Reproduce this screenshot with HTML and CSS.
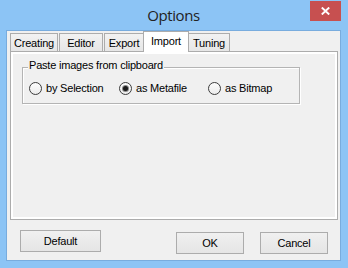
FILE: index.html
```html
<!DOCTYPE html>
<html>
<head>
<meta charset="utf-8">
<title>Options</title>
<link rel="stylesheet" href="styles.css">
</head>
<body>
<div class="window">
  <div class="titlebar">
    <span></span>
    <span class="title">Options</span>
    <div class="close-wrap">
      <div class="close">
        <svg width="9" height="8" viewBox="0 0 9 8"><path d="M0.8 0.5 L8.2 7.5 M8.2 0.5 L0.8 7.5" stroke="#fff" stroke-width="1.9" fill="none"/></svg>
      </div>
    </div>
  </div>
  <div class="client">
    <div class="tabctl">
      <div class="tabrow">
        <div class="tab t-creating">Creating</div>
        <div class="tab t-editor">Editor</div>
        <div class="tab t-export">Export</div>
        <div class="tab t-import selected">Import</div>
        <div class="tab t-tuning">Tuning</div>
      </div>
      <div class="panel">
        <div class="panel-inner">
          <div class="group">
            <div class="legend">Paste images from clipboard</div>
            <div class="radios">
              <div class="radio"><span class="circle"></span><span>by Selection</span></div>
              <div class="radio"><span class="circle checked"></span><span>as Metafile</span></div>
              <div class="radio"><span class="circle"></span><span>as Bitmap</span></div>
            </div>
          </div>
        </div>
      </div>
    </div>
    <div class="buttons">
      <div class="btn btn-default">Default</div>
      <div class="btn btn-ok">OK</div>
      <div class="btn btn-cancel">Cancel</div>
    </div>
  </div>
</div>
</body>
</html>
```
FILE: styles.css
```css
html, body {
  margin: 0;
  padding: 0;
}
body {
  width: 348px;
  height: 268px;
  overflow: hidden;
  background: #8cc4f5;
  font-family: "Liberation Sans", Arial, sans-serif;
  font-size: 11px;
  letter-spacing: -0.2px;
  color: #000;
}
.window {
  box-sizing: border-box;
  width: 348px;
  height: 268px;
  padding: 0 7px 7px 6px;
  display: flex;
  flex-direction: column;
  background: #8cc4f5;
}
.titlebar {
  height: 30px;
  flex: none;
  display: grid;
  grid-template-columns: 1fr auto 1fr;
}
.title {
  font-family: "Open Sans", "DejaVu Sans", sans-serif;
  font-size: 15px;
  line-height: 30px;
  letter-spacing: -0.4px;
  color: #222;
}
.close-wrap {
  display: flex;
  justify-content: flex-end;
  align-items: flex-start;
}
.close {
  width: 31px;
  height: 20px;
  margin-top: 1px;
  background: #c75050;
  display: flex;
  align-items: center;
  justify-content: center;
}
.client {
  flex: 1;
  border: 1px solid #78acde;
  background: #f0f0f0;
  display: flex;
  flex-direction: column;
}
.tabctl {
  margin: 0 2px 0 3px;
}
.tabrow {
  display: flex;
  align-items: flex-end;
  height: 20px;
}
.tab {
  box-sizing: border-box;
  height: 18px;
  border: 1px solid #acacac;
  border-bottom: none;
  background: linear-gradient(#f2f2f2, #e6e6e6);
  text-align: center;
  line-height: 16px;
  padding-top: 1px;
  white-space: nowrap;
}
.t-creating { width: 48px; margin-right: 1px; }
.t-editor { width: 44px; margin-right: 1px; }
.t-export { width: 40px; }
.t-import { width: 46px; margin-left: -1px; }
.t-tuning { width: 42px; margin-left: -1px; }
.tab.selected {
  position: relative;
  z-index: 1;
  height: 21px;
  margin-bottom: -1px;
  background: #fff;
  line-height: 18px;
  padding-top: 0;
  padding-bottom: 2px;
}
.panel {
  box-sizing: border-box;
  height: 169px;
  border: 1px solid #acacac;
  background: #fff;
  padding: 2px;
}
.panel-inner {
  display: flow-root;
  height: 100%;
  background: #f0f0f0;
}
.group {
  box-sizing: border-box;
  width: 278px;
  height: 37px;
  margin: 13px 0 0 9px;
  border: 1px solid #b4b4b4;
  box-shadow: 1px 1px 0 #fff, inset 1px 1px 0 #fff;
}
.legend {
  width: fit-content;
  margin: -9px 0 0 5px;
  padding: 0 1px;
  background: #f0f0f0;
  line-height: 13px;
  white-space: nowrap;
}
.radios {
  display: grid;
  grid-template-columns: 90px 89px auto;
  margin: 10px 0 0 6px;
}
.radio {
  display: flex;
  align-items: center;
  gap: 4px;
  height: 13px;
  line-height: 13px;
  white-space: nowrap;
}
.circle {
  box-sizing: border-box;
  flex: none;
  width: 13px;
  height: 13px;
  border-radius: 50%;
  border: 1px solid #3c3c3c;
  background: linear-gradient(#fdfdfd, #ececec);
  display: flex;
  align-items: center;
  justify-content: center;
}
.circle.checked::after {
  content: "";
  width: 5px;
  height: 5px;
  border-radius: 50%;
  background: #1a1a1a;
  box-shadow: 0 0 0 1px #8a8a8a;
}
.buttons {
  display: flex;
  align-items: flex-start;
  padding: 0 12px 0 13px;
}
.btn {
  box-sizing: border-box;
  height: 22px;
  border: 1px solid #acacac;
  background: linear-gradient(#f0f0f0, #e5e5e5);
  display: flex;
  align-items: center;
  justify-content: center;
  white-space: nowrap;
}
.btn-default {
  width: 81px;
  margin-top: 10px;
}
.btn-ok {
  width: 68px;
  margin-top: 12px;
  margin-left: auto;
}
.btn-cancel {
  width: 68px;
  margin-top: 12px;
  margin-left: 16px;
}
```
